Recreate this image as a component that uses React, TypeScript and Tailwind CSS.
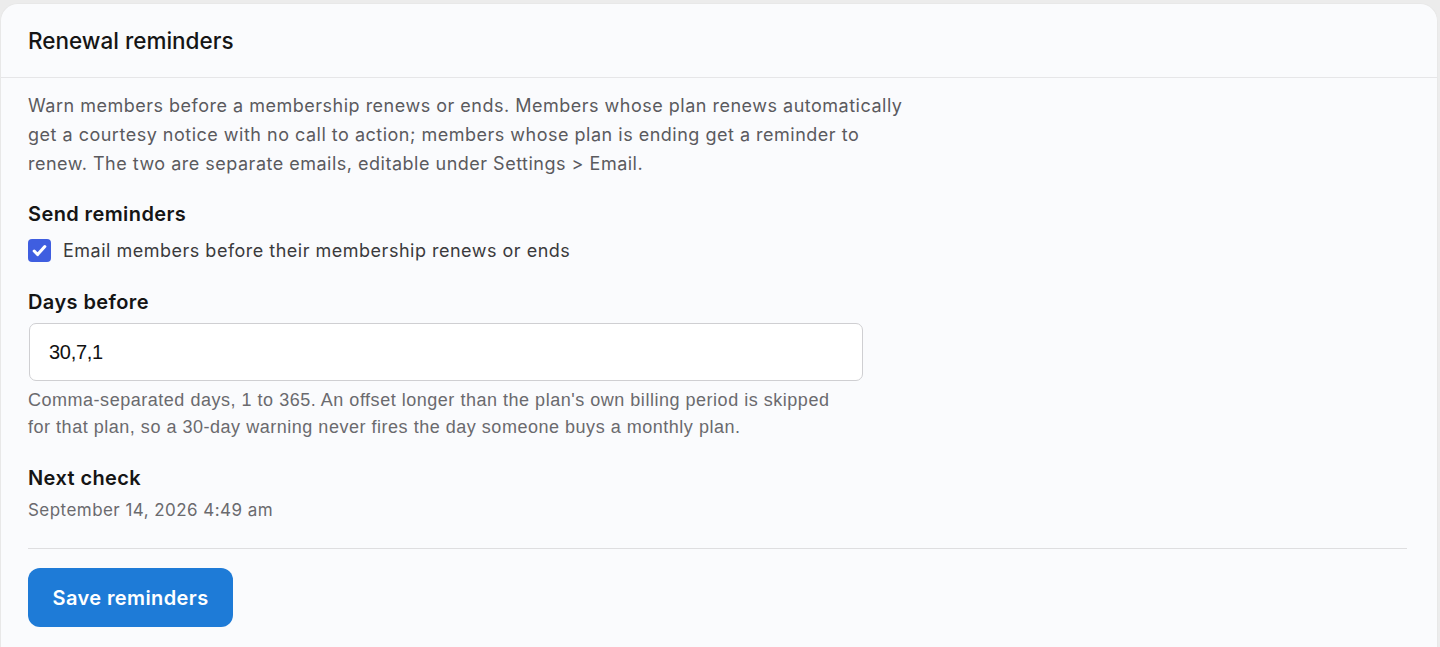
import { useState } from 'react';

// Settings card: renewal reminder options
export default function App() {
  const [enabled, setEnabled] = useState(true);
  const [days, setDays] = useState('30,7,1');

  return (
    <div className="min-h-screen bg-[#ececec] pt-[3px] pr-[2px]">
      <div className="min-h-[644px] rounded-t-[18px] bg-[#fafbfd] border border-[#e8e8e8] border-b-0 font-['Inter',sans-serif]">
        {/* header */}
        <div className="h-[74px] flex items-center px-[27px] border-b border-[#e6e6e8]">
          <h2 className="text-[22.5px] font-medium text-[#151515] tracking-[0px]">Renewal reminders</h2>
        </div>

        <div className="px-[27px] pt-[13px]">
          <p className="max-w-[890px] text-[18px] leading-[29px] text-[#5a5a5e] tracking-[0.5px]">
            Warn members before a membership renews or ends. Members whose plan renews automatically get a courtesy
            notice with no call to action; members whose plan is ending get a reminder to renew. The two are separate
            emails, editable under Settings &gt; Email.
          </p>

          <h3 className="mt-[22px] text-[20px] leading-[28px] font-semibold text-[#151515] tracking-[0.4px]">Send reminders</h3>
          <label className="mt-[8px] flex items-center gap-[12px] h-[28px] cursor-pointer">
            <span
              className={
                'w-[23px] h-[23px] rounded-[4px] flex items-center justify-center ' +
                (enabled ? 'bg-[#3f5ee0]' : 'bg-white border border-[#999]')
              }
            >
              {enabled && (
                <svg width="17" height="17" viewBox="0 0 16 16" fill="none">
                  <path d="M3 8.5l3.2 3.3L13 4.3" stroke="white" strokeWidth="2.9" strokeLinecap="round" strokeLinejoin="round" />
                </svg>
              )}
            </span>
            <input type="checkbox" className="hidden" checked={enabled} onChange={() => setEnabled(!enabled)} />
            <span className="text-[18px] text-[#3a3a3c] tracking-[0.5px]">Email members before their membership renews or ends</span>
          </label>

          <h3 className="mt-[24px] text-[20px] leading-[28px] font-semibold text-[#151515] tracking-[0.4px]">Days before</h3>
          <input
            value={days}
            onChange={(e) => setDays(e.target.value)}
            className="mt-[7px] ml-[1px] block w-[834px] h-[58px] rounded-[7px] border border-[#cfcfd2] bg-white px-[19px] text-[20px] text-[#111] font-['Liberation_Sans',sans-serif] tracking-[-0.3px] outline-none"
          />
          <p className="mt-[6px] max-w-[812px] text-[18px] leading-[27px] text-[#6a6a6e] font-['Liberation_Sans',sans-serif] tracking-[0.52px]">
            Comma-separated days, 1 to 365. An offset longer than the plan's own billing period is skipped for that
            plan, so a 30-day warning never fires the day someone buys a monthly plan.
          </p>

          <h3 className="mt-[23px] text-[20px] leading-[28px] font-semibold text-[#151515] tracking-[0.4px]">Next check</h3>
          <p className="mt-[6px] text-[17px] leading-[24px] text-[#6a6a6e] tracking-[0.45px]">September 14, 2026 4:49 am</p>

          <div className="mt-[26px] mr-[3px] border-t border-[#dedee0]" />

          <button className="mt-[19px] h-[59px] w-[205px] rounded-[12px] bg-[#1e7bd7] text-white text-[20px] font-semibold tracking-[0.4px]">
            Save reminders
          </button>
        </div>
      </div>
    </div>
  );
}
